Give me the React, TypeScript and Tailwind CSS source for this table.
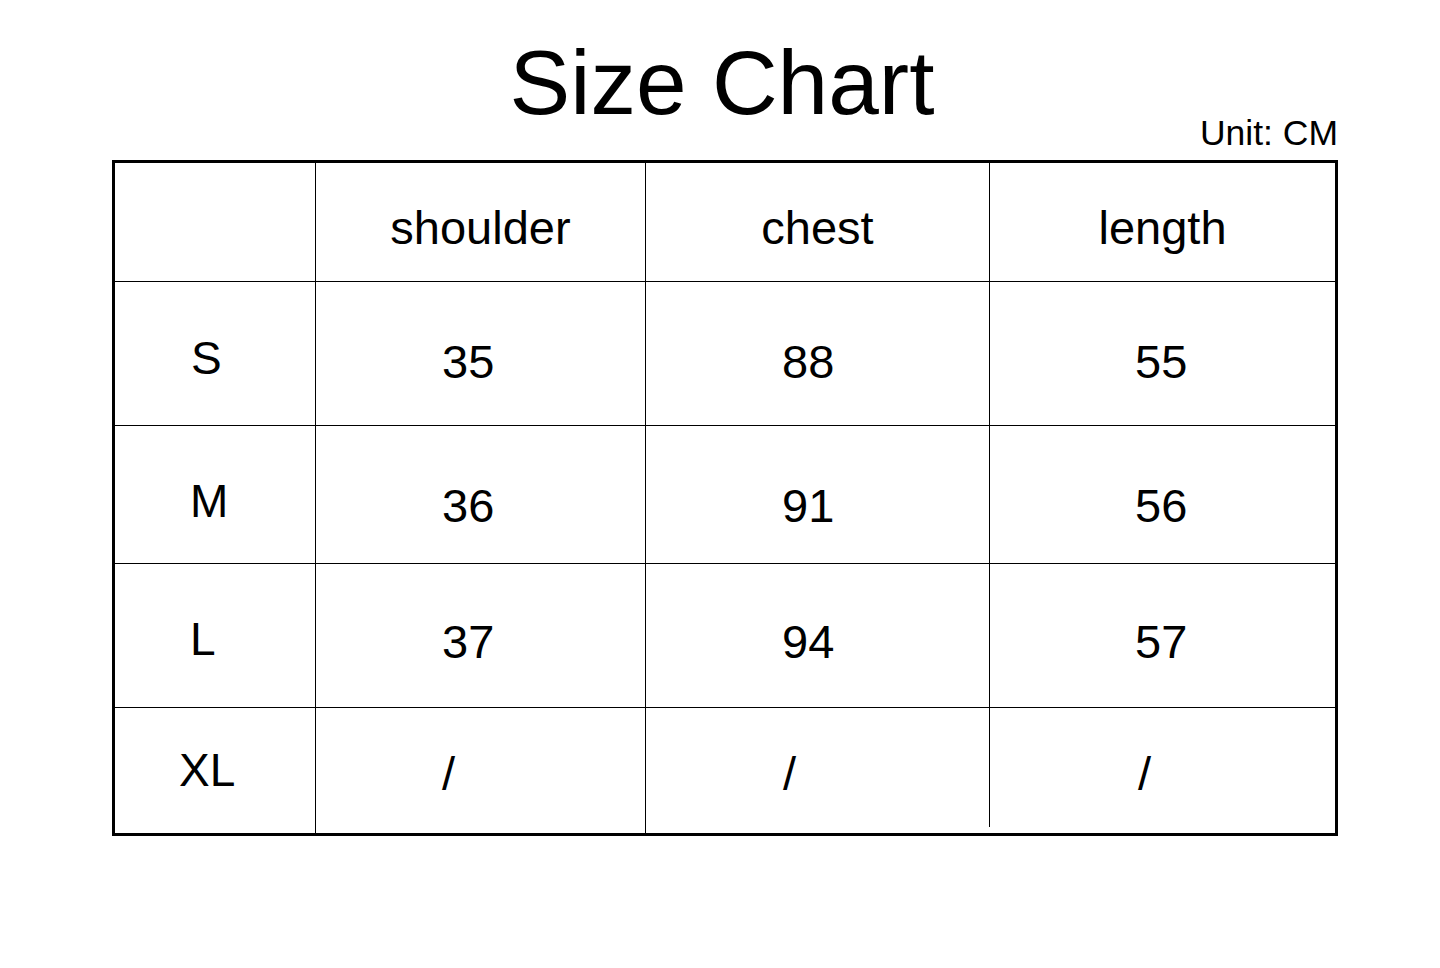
const font = { fontFamily: '"Liberation Sans", Arial, sans-serif' };

const headers = ["shoulder", "chest", "length"];

const rows = [
  {
    size: "S",
    height: "h-[144px]",
    labelCls: "pt-[53px] pl-[76px]",
    valCls: ["pt-[56px] pl-[126px]", "pt-[56px] pl-[136px]", "pt-[56px] pl-[145px]"],
    values: ["35", "88", "55"],
  },
  {
    size: "M",
    height: "h-[138px]",
    labelCls: "pt-[52px] pl-[75px]",
    valCls: ["pt-[56px] pl-[126px]", "pt-[56px] pl-[136px]", "pt-[56px] pl-[145px]"],
    values: ["36", "91", "56"],
  },
  {
    size: "L",
    height: "h-[144px]",
    labelCls: "pt-[52px] pl-[75px]",
    valCls: ["pt-[54px] pl-[126px]", "pt-[54px] pl-[136px]", "pt-[54px] pl-[145px]"],
    values: ["37", "94", "57"],
  },
];

const cols = "grid grid-cols-[200px_330px_344px_346px]";

export default function App() {
  return (
    <div className="min-h-[968px] w-full bg-white text-black" style={font}>
      <div className="ml-[112px] w-[1226px]">
        <h1 className="pt-[37px] pr-[6px] text-center text-[91px] leading-[91px] font-normal">Size Chart</h1>
        <p className="-mt-[12px] text-right text-[35.5px] leading-[35px]">Unit: CM</p>

        <div className="mt-[9px] h-[676px] border-[3px] border-black">
          {/* header */}
          <div className={`${cols} h-[118px]`}>
            <div />
            {headers.map((h) => (
              <div key={h} className="border-l border-black pt-[41px] text-center text-[47px] leading-none">
                {h}
              </div>
            ))}
          </div>

          {rows.map((row) => (
            <div key={row.size} className={`${cols} ${row.height} border-t border-black`}>
              <div className={`${row.labelCls} text-[46px] leading-none`}>{row.size}</div>
              {row.values.map((v, i) => (
                <div key={i} className={`border-l border-black ${row.valCls[i]} text-[47px] leading-none`}>
                  {v}
                </div>
              ))}
            </div>
          ))}

          {/* XL row, last divider stops short of the bottom border */}
          <div className={`${cols} h-[126px] border-t border-black`}>
            <div className="pt-[39px] pl-[64px] text-[46px] leading-none">XL</div>
            <div className="border-l border-black pt-[42px] pl-[126px] text-[47px] leading-none">/</div>
            <div className="border-l border-black pt-[42px] pl-[137px] text-[47px] leading-none">/</div>
            <div className="flex">
              <span className="h-[119px] w-px shrink-0 bg-black" />
              <span className="pt-[42px] pl-[148px] text-[47px] leading-none">/</span>
            </div>
          </div>
        </div>
      </div>
    </div>
  );
}
